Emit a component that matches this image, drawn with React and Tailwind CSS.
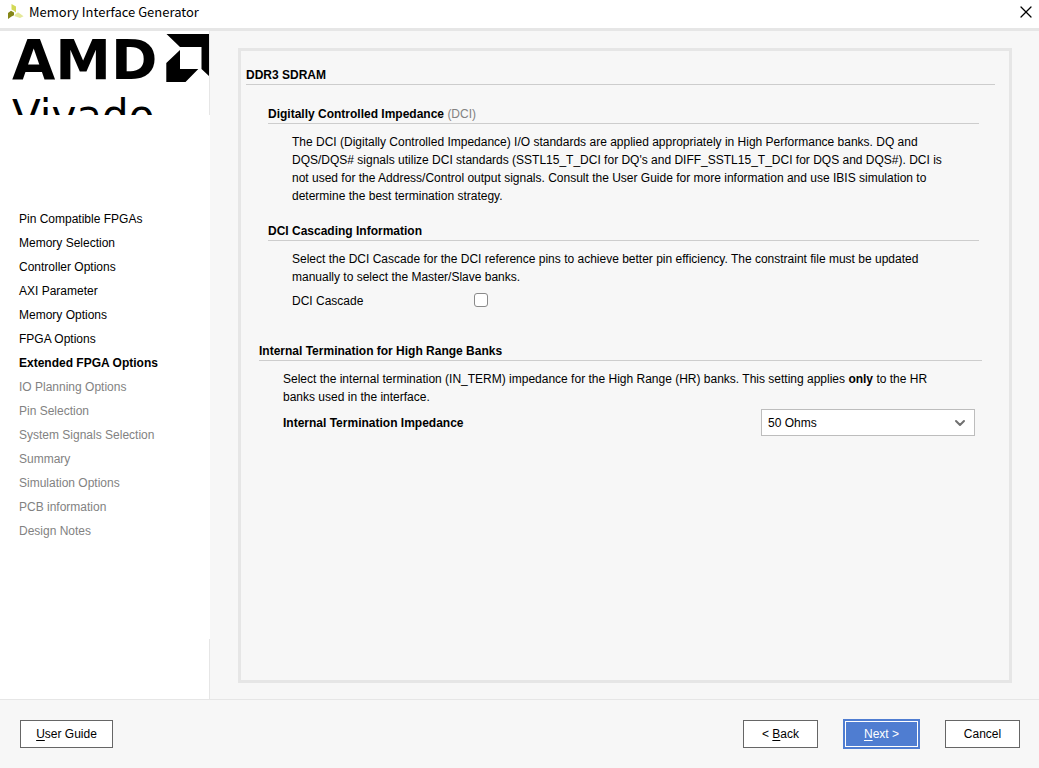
import React, { useState } from 'react';
import { X, ChevronDown } from 'lucide-react';

const steps = [
  'Pin Compatible FPGAs',
  'Memory Selection',
  'Controller Options',
  'AXI Parameter',
  'Memory Options',
  'FPGA Options',
  'Extended FPGA Options',
  'IO Planning Options',
  'Pin Selection',
  'System Signals Selection',
  'Summary',
  'Simulation Options',
  'PCB information',
  'Design Notes',
];

const currentStep = 6;

function stepClass(index) {
  if (index === currentStep) return 'font-bold text-black';
  return index < currentStep ? 'text-black' : 'text-[#828282]';
}

function AppIcon() {
  return (
    <svg width="17" height="16" viewBox="0 0 17 16" aria-hidden="true">
      <path d="M4.500 0 L9 2.600 V8.500 L6.800 6.800 L4.500 5.600 Z" fill="#d3d957" />
      <path d="M1 9 L4 6.800 L7 8.400 V11.200 L4.500 12.500 L1 15 Z" fill="#858718" />
      <path d="M7.300 12 L8.500 10.300 L11 8.300 L16.500 12.200 L13 14 Z" fill="#e5e99a" />
    </svg>
  );
}

function SectionHeading({ children }) {
  return (
    <h2 className="border-b border-[#cdcdcd] font-bold leading-[18px]">{children}</h2>
  );
}

function DialogButton({ children }) {
  return (
    <button type="button" className="h-7 w-[75px] border border-[#666666] bg-white text-black">
      {children}
    </button>
  );
}

function Sidebar() {
  return (
    <aside className="flex w-[210px] shrink-0 flex-col bg-white">
      <div className="h-[84px] overflow-hidden border-r border-[#e6e6e6] pl-3">
        <div className="flex h-[60px] items-start justify-between pt-[3px]">
          <span className="font-['DejaVu_Sans',sans-serif] text-[56px] font-bold leading-[52px]">AMD</span>
          <svg width="43" height="48" viewBox="0 0 43 48" className="shrink-0" aria-hidden="true">
            <path d="M0.500 0 H43 V42 L35.500 35 V13 H14 Z" />
            <path d="M0.300 29 L14 16 V35 H32.300 L19.500 48 H0.300 Z" />
          </svg>
        </div>
        <p className="font-['DejaVu_Sans',sans-serif] text-[42px] leading-[50px]">Vivado</p>
      </div>

      <nav className="flex-1 pt-[92px]">
        <ul>
          {steps.map((step, i) => (
            <li key={step} className={`h-6 pl-[19px] leading-6 ${stepClass(i)}`}>
              {step}
            </li>
          ))}
        </ul>
      </nav>
      <div className="h-[60px] border-r border-[#e6e6e6]" />
    </aside>
  );
}

export default function App() {
  const [cascade, setCascade] = useState(false);
  const [impedance, setImpedance] = useState('50 Ohms');

  return (
    <div className="flex min-h-screen flex-col bg-[#f7f7f7] font-['Liberation_Sans',Arial,sans-serif] text-[12px] text-black">
      {/* Title bar */}
      <header className="flex h-[31px] items-start justify-between border-b-3 border-[#e6e6e6] bg-white pl-[7px] pr-[3px]">
        <div className="flex h-6 items-center gap-[5px]">
          <AppIcon />
          <h1 className="font-['Noto_Sans_CJK_SC',sans-serif] text-[13px]">Memory Interface Generator</h1>
        </div>
        <button type="button" aria-label="Close" className="flex h-6 items-center">
          <X size={20} strokeWidth={1.5} />
        </button>
      </header>

      <div className="flex flex-1">
        <Sidebar />

        <main className="mb-4 ml-7 mr-[27px] mt-[17px] flex-1 border-3 border-[#e6e6e6] pl-[5px] pr-[14px] pt-[15px]">
          <SectionHeading>DDR3 SDRAM</SectionHeading>

          <section className="mt-5 pl-[22px] pr-4">
            <SectionHeading>
              Digitally Controlled Impedance <span className="font-normal text-[#828282]">(DCI)</span>
            </SectionHeading>
            <p className="mt-[9px] px-6 leading-[18px]">
              The DCI (Digitally Controlled Impedance) I/O standards are applied appropriately in High
              Performance banks. DQ and DQS/DQS# signals utilize DCI standards (SSTL15_T_DCI for DQ's
              and DIFF_SSTL15_T_DCI for DQS and DQS#). DCI is not used for the Address/Control output
              signals. Consult the User Guide for more information and use IBIS simulation to determine
              the best termination strategy.
            </p>
          </section>

          <section className="mt-[17px] pl-[22px] pr-4">
            <SectionHeading>DCI Cascading Information</SectionHeading>
            <div className="mt-[9px] px-6 leading-[18px]">
              <p>
                Select the DCI Cascade for the DCI reference pins to achieve better pin efficiency. The
                constraint file must be updated manually to select the Master/Slave banks.
              </p>
              <div className="mt-[6px] flex items-start">
                <label htmlFor="cascade" className="w-[182px]">DCI Cascade</label>
                <input
                  id="cascade"
                  type="checkbox"
                  checked={cascade}
                  onChange={(e) => setCascade(e.target.checked)}
                  className="mt-px size-[14px] appearance-none rounded-[3px] border border-[#8a8a8a] bg-white checked:bg-[#4f7dd1]"
                />
              </div>
            </div>
          </section>

          <section className="mt-8 px-[13px]">
            <SectionHeading>Internal Termination for High Range Banks</SectionHeading>
            <p className="mt-[9px] px-6 leading-[18px]">
              Select the internal termination (IN_TERM) impedance for the High Range (HR) banks. This
              setting applies <b>only</b> to the HR banks used in the interface.
            </p>
            <div className="mt-[3px] flex items-center justify-between pl-6 pr-[7px]">
              <label htmlFor="impedance" className="font-bold">Internal Termination Impedance</label>
              <div className="relative">
                <select
                  id="impedance"
                  value={impedance}
                  onChange={(e) => setImpedance(e.target.value)}
                  className="block h-[27px] w-[214px] appearance-none border border-[#bdbdbd] bg-white px-[6px]"
                >
                  <option>40 Ohms</option>
                  <option>50 Ohms</option>
                  <option>60 Ohms</option>
                </select>
                <ChevronDown
                  size={16}
                  strokeWidth={3}
                  className="pointer-events-none absolute right-[7px] top-[6px] text-[#707070]"
                />
              </div>
            </div>
          </section>
        </main>
      </div>

      <footer className="flex h-[69px] items-center justify-between border-t border-[#e6e6e6] pl-5 pr-[19px]">
        <button type="button" className="h-7 w-[93px] border border-[#666666] bg-white text-black">
          <u className="underline-offset-2">U</u>ser Guide
        </button>
        <div className="flex items-center gap-[25px]">
          <DialogButton>
            &lt; <u className="underline-offset-2">B</u>ack
          </DialogButton>
          <button
            type="button"
            className="h-[30px] w-[77px] border-2 border-[#4f7dd1] bg-[#4f7dd1] text-white inset-ring inset-ring-white"
          >
            <u className="underline-offset-2">N</u>ext &gt;
          </button>
          <DialogButton>Cancel</DialogButton>
        </div>
      </footer>
    </div>
  );
}
